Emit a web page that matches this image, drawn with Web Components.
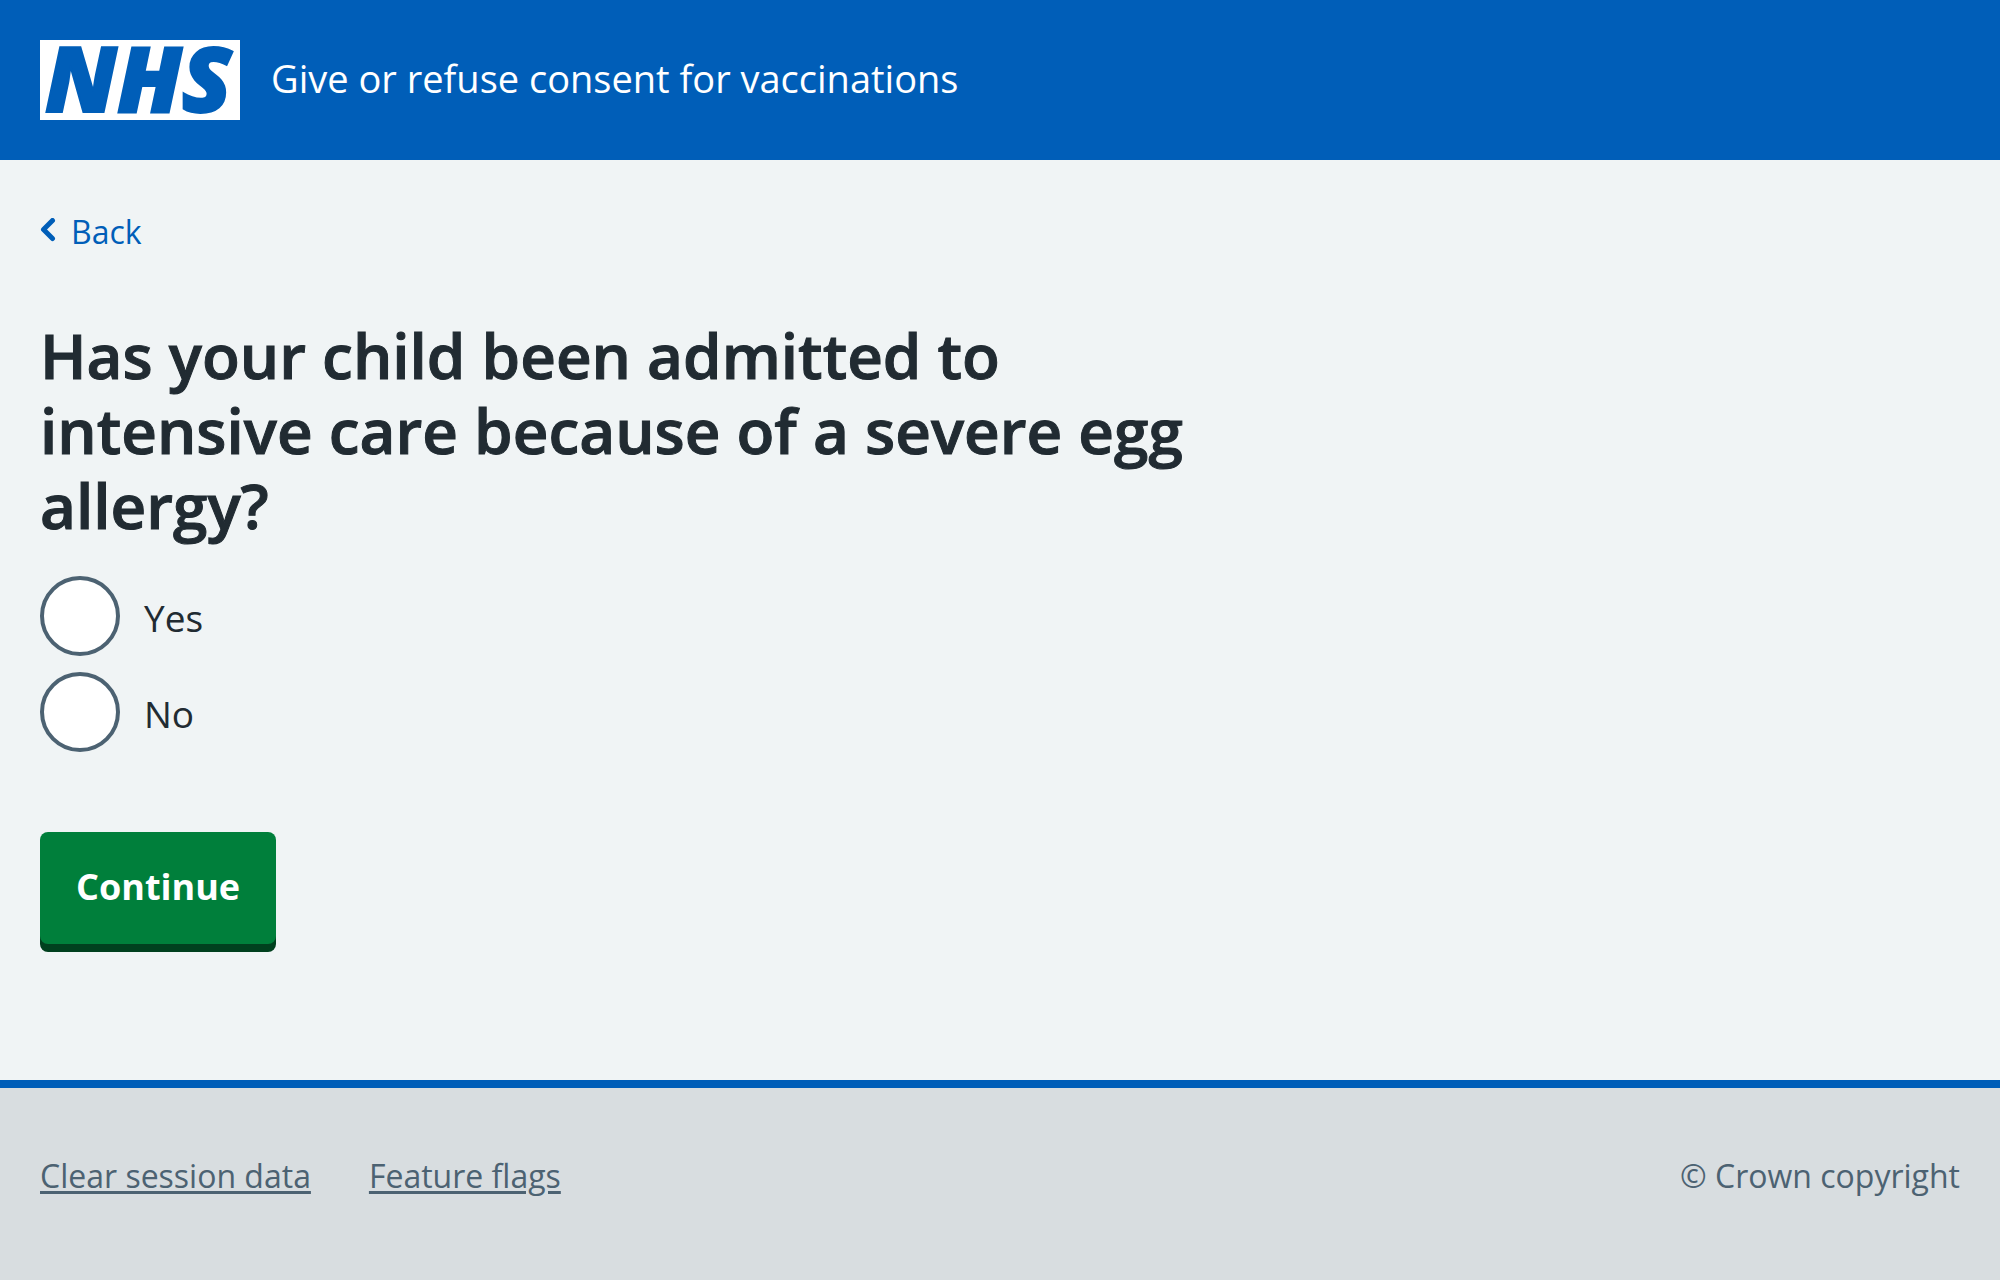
<!DOCTYPE html>
<html lang="en">
<head>
<meta charset="utf-8">
<meta name="viewport" content="width=device-width, initial-scale=1">
<title>Give or refuse consent for vaccinations</title>
<style>
  html, body { margin: 0; height: 100%; }
  body {
    font-family: "Open Sans", "Noto Sans", sans-serif;
    color: #212b32;
    background: #f0f4f5;
    --nhs-blue: #005eb8;
    --nhs-grey: #4c6272;
  }
</style>
</head>
<body>
<consent-page>
  <nhs-header slot="header">Give or refuse consent for vaccinations</nhs-header>
  <back-link>Back</back-link>
  <radio-question name="intensive-care" options="Yes,No">Has your child been admitted to intensive care because of a severe egg allergy?</radio-question>
  <nhs-footer slot="footer">
    <footer-link href="#clear">Clear session data</footer-link>
    <footer-link href="#flags">Feature flags</footer-link>
    <span slot="copyright">© Crown copyright</span>
  </nhs-footer>
</consent-page>

<script>
const define = (name, html, setup) => {
  const template = document.createElement('template');
  template.innerHTML = html;
  customElements.define(name, class extends HTMLElement {
    connectedCallback() {
      if (this.shadowRoot) return;
      const root = this.attachShadow({ mode: 'open' });
      root.append(template.content.cloneNode(true));
      if (setup) setup(this, root);
    }
  });
};

define('consent-page', `
  <style>
    :host { display: flex; flex-direction: column; min-height: 100%; }
    main { padding: 48px 40px 136px; }
    .footer { flex: 1; display: flex; }
  </style>
  <slot name="header"></slot>
  <main><slot></slot></main>
  <div class="footer"><slot name="footer"></slot></div>
`);

define('nhs-logo', `
  <style>
    :host { display: block; }
    svg { display: block; width: 200px; height: 80px; overflow: visible; }
    text { font: italic 800 91px "Open Sans", sans-serif; fill: var(--nhs-blue); stroke: var(--nhs-blue); stroke-width: 2px; }
  </style>
  <svg viewBox="0 0 200 80" role="img" aria-label="NHS">
    <rect width="200" height="80" fill="#fff"/>
    <text x="5" y="72">NHS</text>
  </svg>
`);

define('nhs-header', `
  <style>
    :host { display: block; background: var(--nhs-blue); color: #fff; }
    header { display: flex; align-items: center; gap: 31px; padding: 40px; }
    a { color: inherit; font-size: 38px; line-height: 56px; padding-bottom: 4px; text-decoration: none; }
  </style>
  <header><nhs-logo></nhs-logo><a href="#home"><slot></slot></a></header>
`);

define('back-link', `
  <style>
    :host { display: flex; margin-bottom: 62px; }
    a { display: flex; align-items: center; gap: 15px; color: var(--nhs-blue); font-size: 32px; line-height: 48px; text-decoration: none; }
    svg { width: 16px; height: 28px; }
  </style>
  <a href="#back">
    <svg viewBox="0 0 16 28" fill="none" stroke="currentColor" stroke-width="5" stroke-linecap="round" stroke-linejoin="round" aria-hidden="true"><path d="M12.500 2.500L3.500 11.500L12.500 20.500"/></svg>
    <span><slot></slot></span>
  </a>
`);

define('radio-option', `
  <style>
    :host { display: flex; }
    label { display: flex; align-items: center; gap: 24px; font-size: 37px; line-height: 56px; cursor: pointer; }
    span { padding-top: 4px; }
    input { appearance: none; box-sizing: border-box; width: 80px; height: 80px; margin: 0; border: 4px solid var(--nhs-grey); border-radius: 50%; background: #fff; }
    input:checked { background: radial-gradient(circle, #212b32 20px, #fff 21px); }
  </style>
  <label><input type="radio"><span><slot></slot></span></label>
`, (host, root) => {
  const input = root.querySelector('input');
  input.name = host.getAttribute('name');
  input.value = host.getAttribute('value');
  input.addEventListener('change', () => {
    for (const other of host.parentNode.querySelectorAll('radio-option')) {
      if (other !== host) other.shadowRoot.querySelector('input').checked = false;
    }
  });
});

define('radio-question', `
  <style>
    :host { display: block; }
    fieldset { border: 0; margin: 0 0 80px; padding: 0; min-width: 0; }
    legend { padding: 0; margin-bottom: 33px; max-width: 1200px; }
    h1 { margin: 0; font-size: 62px; line-height: 75px; font-weight: 600; -webkit-text-stroke: 1px currentColor; }
    .options { display: flex; flex-direction: column; gap: 16px; }
    button {
      display: block; border: 0; border-radius: 8px; padding: 27px 36px 29px;
      background: #007f3b; color: #fff; box-shadow: 0 8px 0 #00401e;
      font-family: inherit; font-size: 36px; line-height: 56px; font-weight: 700; cursor: pointer;
    }
  </style>
  <form>
    <fieldset>
      <legend><h1><slot></slot></h1></legend>
      <div class="options"></div>
    </fieldset>
    <button type="button">Continue</button>
  </form>
`, (host, root) => {
  const list = root.querySelector('.options');
  for (const value of host.getAttribute('options').split(',')) {
    const option = document.createElement('radio-option');
    option.setAttribute('name', host.getAttribute('name'));
    option.setAttribute('value', value.toLowerCase());
    option.textContent = value;
    list.append(option);
  }
});

define('footer-link', `
  <style>
    :host { display: block; }
    a { color: var(--nhs-grey); text-decoration-thickness: 3px; text-underline-offset: 3px; }
  </style>
  <a><slot></slot></a>
`, (host, root) => root.querySelector('a').setAttribute('href', host.getAttribute('href')));

define('nhs-footer', `
  <style>
    :host { display: block; flex: 1; background: #d8dde0; border-top: 8px solid var(--nhs-blue); color: var(--nhs-grey); }
    footer { display: flex; justify-content: space-between; padding: 64px 40px 60px; font-size: 32px; line-height: 48px; }
    nav { display: flex; gap: 58px; }
  </style>
  <footer><nav><slot></slot></nav><slot name="copyright"></slot></footer>
`);
</script>
</body>
</html>
